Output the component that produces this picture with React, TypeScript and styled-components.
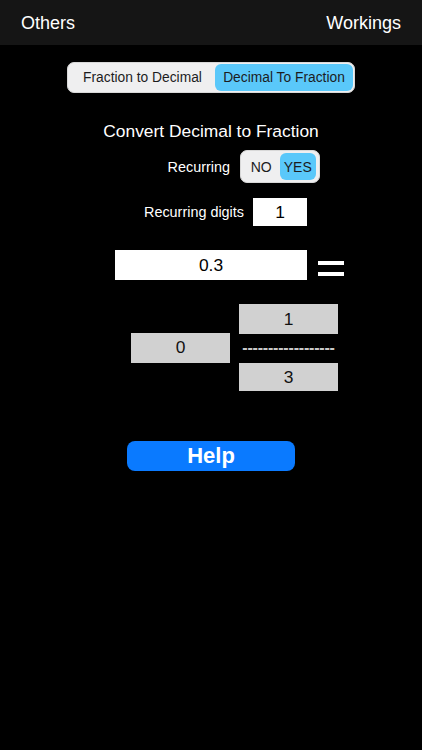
import React, { useState } from 'react';
import styled, { createGlobalStyle } from 'styled-components';

const GlobalStyle = createGlobalStyle`
  html, body {
    margin: 0;
    padding: 0;
    background: #000;
  }
  body {
    font-family: 'Liberation Sans', Arial, Helvetica, sans-serif;
    -webkit-font-smoothing: antialiased;
  }
`;

const App = () => {
  const [mode, setMode] = useState<'f2d' | 'd2f'>('d2f');
  const [recurring, setRecurring] = useState<boolean>(true);

  return (
    <Screen>
      <GlobalStyle />
      <NavBar>
        <NavButton>Others</NavButton>
        <NavButton>Workings</NavButton>
      </NavBar>

      <Segmented>
        <Segment basis={145} active={mode === 'f2d'} onClick={() => setMode('f2d')}>
          Fraction to Decimal
        </Segment>
        <Segment basis={138} active={mode === 'd2f'} onClick={() => setMode('d2f')}>
          Decimal To Fraction
        </Segment>
      </Segmented>

      <Title>Convert Decimal to Fraction</Title>

      <RightRow inset={102} gap={10} top={9}>
        <Label>Recurring</Label>
        <Toggle>
          <ToggleOption active={!recurring} onClick={() => setRecurring(false)}>
            NO
          </ToggleOption>
          <ToggleOption active={recurring} onClick={() => setRecurring(true)}>
            YES
          </ToggleOption>
        </Toggle>
      </RightRow>

      <RightRow inset={115} gap={9} top={15}>
        <Label>Recurring digits</Label>
        <DigitsBox>1</DigitsBox>
      </RightRow>

      <DecimalRow>
        <DecimalBox>0.3</DecimalBox>
        <Equals>
          <Bar />
          <Bar />
        </Equals>
      </DecimalRow>

      <FractionRow>
        <GrayBox>0</GrayBox>
        <FractionColumn>
          <GrayBox>1</GrayBox>
          <Dashes>------------------</Dashes>
          <GrayBox short>3</GrayBox>
        </FractionColumn>
      </FractionRow>

      <HelpButton>Help</HelpButton>
    </Screen>
  );
};

const Screen = styled.div`
  width: 422px;
  min-height: 750px;
  background: #000;
  display: flex;
  flex-direction: column;
`;

const NavBar = styled.div`
  height: 45px;
  background: #151515;
  display: flex;
  align-items: center;
  justify-content: space-between;
  padding: 0 21px;
  box-sizing: border-box;
`;

const NavButton = styled.div`
  color: #fff;
  font-size: 18px;
  padding-top: 1px;
`;

const Segmented = styled.div`
  align-self: center;
  margin-top: 17px;
  width: 288px;
  height: 31px;
  box-sizing: border-box;
  display: flex;
  padding: 1px 2px;
  background: #efeff0;
  border: 1px solid #d8d8d8;
  border-radius: 7px;
`;

const Segment = styled.div<{ active: boolean; basis: number }>`
  flex: 0 0 ${(p) => p.basis}px;
  display: flex;
  align-items: center;
  justify-content: center;
  font-size: 13.8px;
  color: #1c1c1e;
  border-radius: 6px;
  background: ${(p) => (p.active ? '#5ac8fa' : 'transparent')};
  cursor: pointer;
`;

const Title = styled.div`
  margin-top: 28px;
  text-align: center;
  color: #fff;
  font-size: 17.4px;
  line-height: 20px;
`;

const RightRow = styled.div<{ inset: number; gap: number; top: number }>`
  display: flex;
  align-items: center;
  justify-content: flex-end;
  padding-right: ${(p) => p.inset}px;
  gap: ${(p) => p.gap}px;
  margin-top: ${(p) => p.top}px;
`;

const Label = styled.div`
  color: #fff;
  font-size: 14.4px;
`;

const Toggle = styled.div`
  width: 80px;
  height: 33px;
  box-sizing: border-box;
  display: flex;
  padding: 2px 3px 2px 2px;
  background: #efeff0;
  border: 1px solid #d8d8d8;
  border-radius: 7px;
`;

const ToggleOption = styled.div<{ active: boolean }>`
  flex: 1;
  display: flex;
  align-items: center;
  justify-content: center;
  font-size: 14px;
  color: #1c1c1e;
  border-radius: 6px;
  background: ${(p) => (p.active ? '#5ac8fa' : 'transparent')};
  cursor: pointer;
`;

const DigitsBox = styled.div`
  width: 54px;
  height: 28px;
  background: #fff;
  color: #000;
  font-size: 17.4px;
  display: flex;
  align-items: center;
  justify-content: center;
`;

const DecimalRow = styled.div`
  display: flex;
  align-items: center;
  gap: 11px;
  padding-left: 115px;
  margin-top: 24px;
`;

const DecimalBox = styled.div`
  width: 192px;
  height: 30px;
  background: #fff;
  color: #000;
  font-size: 17.4px;
  display: flex;
  align-items: center;
  justify-content: center;
`;

const Equals = styled.div`
  width: 26px;
  display: flex;
  flex-direction: column;
  gap: 7px;
  margin-top: 6px;
`;

const Bar = styled.div`
  height: 4px;
  background: #fff;
`;

const FractionRow = styled.div`
  display: flex;
  align-items: center;
  gap: 9px;
  padding-left: 131px;
  margin-top: 24px;
`;

const FractionColumn = styled.div`
  display: flex;
  flex-direction: column;
  width: 99px;
`;

const GrayBox = styled.div<{ short?: boolean }>`
  width: 99px;
  height: ${(p) => (p.short ? 28 : 30)}px;
  background: #d1d1d1;
  color: #111;
  font-size: 17.4px;
  display: flex;
  align-items: center;
  justify-content: center;
`;

const Dashes = styled.div`
  height: 29px;
  line-height: 27px;
  color: #c9c9c9;
  font-size: 16px;
  font-weight: bold;
  overflow: hidden;
  white-space: nowrap;
  text-align: center;
  letter-spacing: -0.2px;
`;

const HelpButton = styled.button`
  align-self: flex-start;
  margin-left: 127px;
  margin-top: 50px;
  width: 168px;
  height: 30px;
  border: none;
  border-radius: 8px;
  background: #0a7aff;
  color: #fff;
  font-family: 'Liberation Sans', Arial, sans-serif;
  font-weight: bold;
  font-size: 22px;
  padding: 0;
  cursor: pointer;
`;

export default App;
